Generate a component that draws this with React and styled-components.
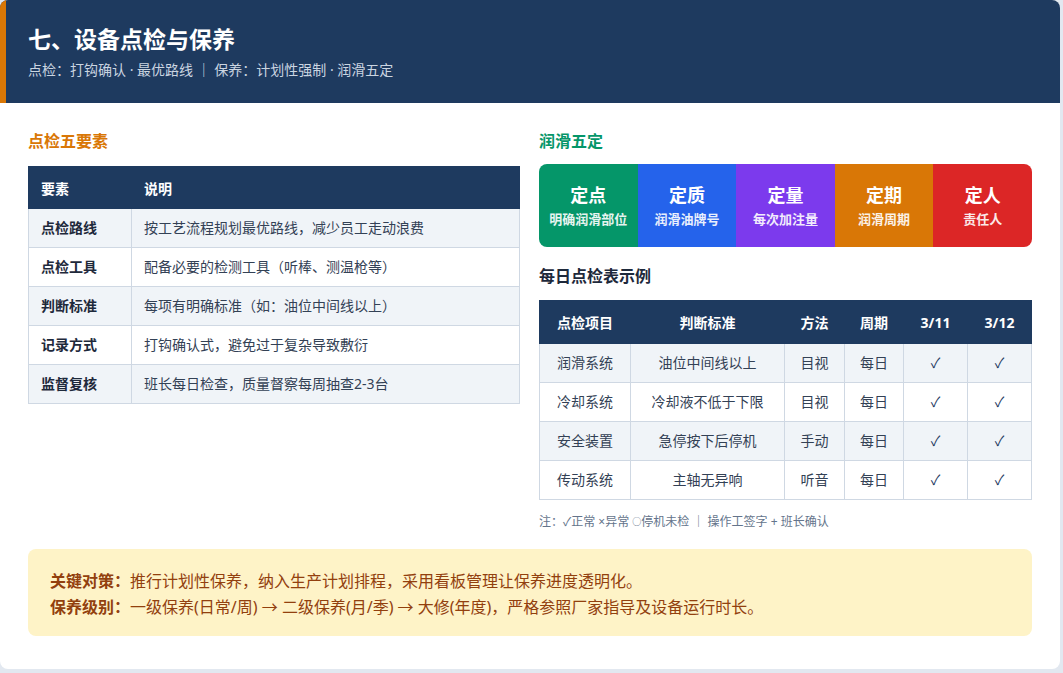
import styled, { createGlobalStyle } from "styled-components"

const GlobalStyle = createGlobalStyle`
    body {
        margin: 0;
        background: #e2e8f0;
        font-family: "Noto Sans", "Noto Sans CJK SC", sans-serif;
    }
`

const Card = styled.div`
    width: 1060px;
    height: 669px;
    background: #ffffff;
    border-radius: 8px;
    overflow: hidden;
    display: flex;
    flex-direction: column;
`

const Header = styled.header`
    height: 103px;
    box-sizing: border-box;
    background: #1e3a5f;
    border-left: 6px solid #d97706;
    padding: 0 22px;
    display: flex;
    flex-direction: column;
    justify-content: center;
    gap: 7px;
`

const Title = styled.h1`
    margin: 0;
    font-size: 23px;
    line-height: 30px;
    font-weight: 700;
    color: #ffffff;
`

const Subtitle = styled.div`
    font-size: 14px;
    line-height: 18px;
    color: #cbd5e1;
`

const Body = styled.main`
    padding: 27px 28px 0;
    display: flex;
    flex-direction: column;
    gap: 19px;
`

const Columns = styled.div`
    display: grid;
    grid-template-columns: 1fr 1fr;
    gap: 19px;
`

const Column = styled.section`
    display: flex;
    flex-direction: column;
`

const SectionTitle = styled.h2`
    margin: 0 0 ${p => p.$gap}px;
    font-size: 16px;
    line-height: 22px;
    font-weight: 700;
    color: ${p => p.$color};
`

const Table = styled.table`
    width: 100%;
    border-collapse: collapse;
    table-layout: fixed;
    font-size: 14px;
`

const Th = styled.th`
    background: #1e3a5f;
    color: #ffffff;
    font-weight: 700;
    text-align: ${p => p.$align || "left"};
    padding: 0 12px;
    height: ${p => p.$h}px;
    border: 1px solid #1e3a5f;
`

const Row = styled.tr`
    background: ${p => p.$striped ? "#f0f4f8" : "#ffffff"};
`

const Td = styled.td`
    border: 1px solid #cfd8e3;
    padding: 0 12px;
    height: 38px;
    line-height: 18px;
    color: ${p => p.$strong ? "#1e293b" : "#334155"};
    font-weight: ${p => p.$strong ? 700 : 400};
    text-align: ${p => p.$align || "left"};
    white-space: nowrap;
`

const Check = styled.span`
    color: #1e3a5f;
    font-size: 14px;
`

const FiveGrid = styled.div`
    display: grid;
    grid-template-columns: repeat(5, 1fr);
    border-radius: 8px;
    overflow: hidden;
    height: 83px;
    margin-bottom: 18px;
`

const FiveItem = styled.div`
    background: ${p => p.$bg};
    color: #ffffff;
    display: flex;
    flex-direction: column;
    align-items: center;
    justify-content: center;
    gap: 4px;
`

const FiveName = styled.div`
    font-size: 18px;
    line-height: 24px;
    font-weight: 700;
`

const FiveDesc = styled.div`
    font-size: 13px;
    line-height: 17px;
    font-weight: 700;
    opacity: 0.9;
`

const Note = styled.div`
    margin-top: 14px;
    font-size: 12px;
    line-height: 16px;
    color: #64748b;
`

const Circle = styled.span`
    font-size: 9px;
    vertical-align: 1px;
`

const KeyBox = styled.div`
    background: #fef3c7;
    border-radius: 8px;
    padding: 19px 22px 16px;
    font-size: 16px;
    line-height: 26px;
    color: #92400e;
`

const KeyLabel = styled.b`
    font-weight: 700;
`

const elements = [
    ["点检路线", "按工艺流程规划最优路线，减少员工走动浪费"],
    ["点检工具", "配备必要的检测工具（听棒、测温枪等）"],
    ["判断标准", "每项有明确标准（如：油位中间线以上）"],
    ["记录方式", "打钩确认式，避免过于复杂导致敷衍"],
    ["监督复核", "班长每日检查，质量督察每周抽查2-3台"],
]

const five = [
    ["定点", "明确润滑部位", "#059669"],
    ["定质", "润滑油牌号", "#2563eb"],
    ["定量", "每次加注量", "#7c3aed"],
    ["定期", "润滑周期", "#d97706"],
    ["定人", "责任人", "#dc2626"],
]

const daily = [
    ["润滑系统", "油位中间线以上", "目视"],
    ["冷却系统", "冷却液不低于下限", "目视"],
    ["安全装置", "急停按下后停机", "手动"],
    ["传动系统", "主轴无异响", "听音"],
]

export default function App() {
    return (
        <>
            <GlobalStyle />
            <Card>
                <Header>
                    <Title>七、设备点检与保养</Title>
                    <Subtitle>点检：打钩确认 · 最优路线 ｜ 保养：计划性强制 · 润滑五定</Subtitle>
                </Header>

                <Body>
                    <Columns>
                        <Column>
                            <SectionTitle $color="#d97706" $gap={14}>点检五要素</SectionTitle>
                            <Table>
                                <colgroup>
                                    <col style={{ width: "103px" }} />
                                    <col />
                                </colgroup>
                                <thead>
                                    <tr>
                                        <Th $h={41}>要素</Th>
                                        <Th $h={41}>说明</Th>
                                    </tr>
                                </thead>
                                <tbody>
                                    {elements.map(([k, v], i) => (
                                        <Row key={k} $striped={i % 2 === 0}>
                                            <Td $strong>{k}</Td>
                                            <Td>{v}</Td>
                                        </Row>
                                    ))}
                                </tbody>
                            </Table>
                        </Column>

                        <Column>
                            <SectionTitle $color="#059669" $gap={12}>润滑五定</SectionTitle>
                            <FiveGrid>
                                {five.map(([name, desc, bg]) => (
                                    <FiveItem key={name} $bg={bg}>
                                        <FiveName>{name}</FiveName>
                                        <FiveDesc>{desc}</FiveDesc>
                                    </FiveItem>
                                ))}
                            </FiveGrid>

                            <SectionTitle $color="#1e293b" $gap={13}>每日点检表示例</SectionTitle>
                            <Table>
                                <colgroup>
                                    <col style={{ width: "91px" }} />
                                    <col style={{ width: "154px" }} />
                                    <col style={{ width: "60px" }} />
                                    <col style={{ width: "59px" }} />
                                    <col style={{ width: "64px" }} />
                                    <col style={{ width: "64px" }} />
                                </colgroup>
                                <thead>
                                    <tr>
                                        {["点检项目", "判断标准", "方法", "周期", "3/11", "3/12"].map(h => (
                                            <Th key={h} $h={42} $align="center">{h}</Th>
                                        ))}
                                    </tr>
                                </thead>
                                <tbody>
                                    {daily.map(([item, std, way], i) => (
                                        <Row key={item} $striped={i % 2 === 0}>
                                            <Td $align="center">{item}</Td>
                                            <Td $align="center">{std}</Td>
                                            <Td $align="center">{way}</Td>
                                            <Td $align="center">每日</Td>
                                            <Td $align="center"><Check>✓</Check></Td>
                                            <Td $align="center"><Check>✓</Check></Td>
                                        </Row>
                                    ))}
                                </tbody>
                            </Table>
                            <Note>注：✓正常 ×异常 <Circle>○</Circle>停机未检 ｜ 操作工签字 + 班长确认</Note>
                        </Column>
                    </Columns>

                    <KeyBox>
                        <div>
                            <KeyLabel>关键对策：</KeyLabel>推行计划性保养，纳入生产计划排程，采用看板管理让保养进度透明化。
                        </div>
                        <div>
                            <KeyLabel>保养级别：</KeyLabel>一级保养(日常/周) → 二级保养(月/季) → 大修(年度)，严格参照厂家指导及设备运行时长。
                        </div>
                    </KeyBox>
                </Body>
            </Card>
        </>
    )
}
